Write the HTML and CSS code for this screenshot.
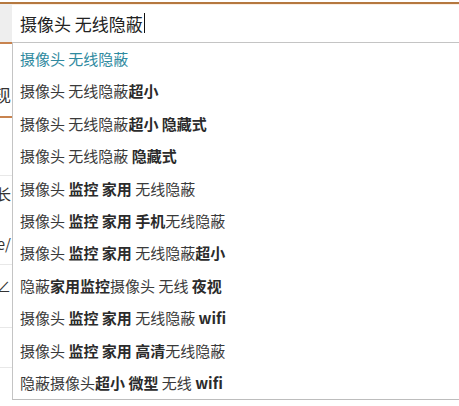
FILE: index.html
```html
<!DOCTYPE html>
<html>
<head>
	<meta charset="utf-8">
	<meta name="viewport" content="width=device-width">
	<title>搜索</title>
	<link rel="stylesheet" href="styles.css">
</head>
<body>
	<div class="page">
		<aside class="side">
			<div class="side-top"></div>
			<div class="side-tab"><span>发现</span></div>
			<div class="side-row row-a"></div>
			<div class="side-row row-b"><span>增长</span></div>
			<div class="side-row row-c"><span>home/</span></div>
			<div class="side-row row-d"><span>∠</span></div>
			<div class="side-row row-e"></div>
			<div class="side-row row-f"></div>
		</aside>

		<div class="search">
			<div class="search-box">
				<span class="query">摄像头 无线隐蔽</span><span class="caret"></span>
			</div>
			<ul class="suggest">
				<li class="current">摄像头 无线隐蔽</li>
				<li>摄像头 无线隐蔽<b>超小</b></li>
				<li>摄像头 无线隐蔽<b>超小 隐藏式</b></li>
				<li>摄像头 无线隐蔽 <b>隐藏式</b></li>
				<li>摄像头 <b>监控 家用</b> 无线隐蔽</li>
				<li>摄像头 <b>监控 家用 手机</b>无线隐蔽</li>
				<li>摄像头 <b>监控 家用</b> 无线隐蔽<b>超小</b></li>
				<li>隐蔽<b>家用监控</b>摄像头 无线 <b>夜视</b></li>
				<li>摄像头 <b>监控 家用</b> 无线隐蔽 <b>wifi</b></li>
				<li>摄像头 <b>监控 家用 高清</b>无线隐蔽</li>
				<li>隐蔽摄像头<b>超小 微型</b> 无线 <b>wifi</b></li>
			</ul>
		</div>
	</div>
</body>
</html>
```

FILE: styles.css
```css
body{
	margin: 0;
	padding: 0;
	background: #ffffff;
	font-family: "Noto Sans CJK SC", "Noto Sans", sans-serif;
	color: #333333;
}

/* Page frame */
.page{
	margin-top: 2px;
	border-top: 2px solid #b5783f;
	display: flex;
	height: 402px;
	overflow: hidden;
}

/* Left strip, mostly hidden behind the dropdown */
.side{
	width: 12px;
	flex: none;
	overflow: hidden;
	font-size: 17px;
}

.side-top{
	height: 38px;
	background: #eeeeee;
	border-bottom: 2px solid #c8834f;
}

.side-tab, .side-row{
	display: flex;
	justify-content: flex-end;
	white-space: nowrap;
	padding-right: 1px;
	box-sizing: border-box;
}

.side-tab{
	height: 74px;
	align-items: flex-end;
	padding-bottom: 9px;
	border-bottom: 2px solid #c8834f;
}

.side-row{
	border-bottom: 1px solid #e8e8e8;
	font-size: 15px;
}

.row-a{ height: 58px; }
.row-b{ height: 40px; border-bottom: none; align-items: flex-end; padding-bottom: 12px; }
.row-c{ height: 49px; align-items: flex-start; padding-top: 17px; }
.row-d{ height: 63px; align-items: flex-start; padding-top: 10px; }
.row-e{ height: 40px; }
.row-f{ height: 40px; border-bottom: none; }

/* Search box */
.search{
	flex: 1;
}

.search-box{
	height: 38px;
	display: flex;
	align-items: center;
	padding-left: 8px;
	border-bottom: 1px solid #c4c4c4;
	box-shadow: inset 0 1px 0 #fbeee3;
	font-size: 17px;
	color: #222222;
}

.caret{
	display: inline-block;
	width: 1px;
	height: 20px;
	background: #111111;
	margin-left: 1px;
}

/* Suggestions */
.suggest{
	list-style: none;
	margin: 0;
	padding: 0;
	border-left: 1px solid #c4c4c4;
	border-bottom: 1px solid #bdbdbd;
}

.suggest li{
	height: 32.4px;
	line-height: 32.4px;
	padding-left: 7px;
	font-size: 15px;
	color: #3a3a3a;
	white-space: nowrap;
}

.suggest li b{
	color: #2b2b2b;
}

.suggest .current{
	color: #2f8aa0;
}
```
